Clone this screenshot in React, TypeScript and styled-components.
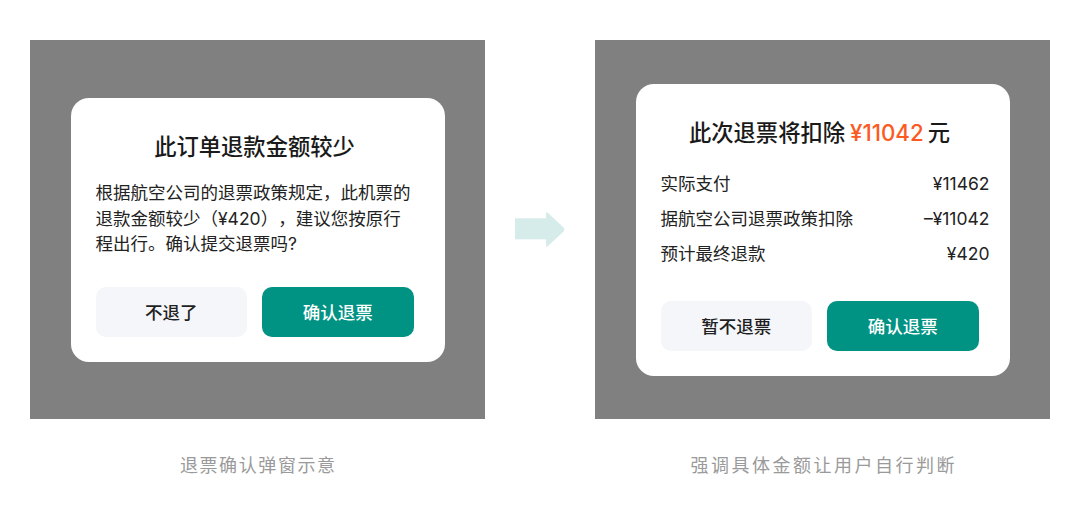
import React from "react";
import styled, { createGlobalStyle } from "styled-components";

const GlobalStyle = createGlobalStyle`
  html, body {
    margin: 0;
    padding: 0;
    background: #ffffff;
  }
  body {
    font-family: "Inter", "Noto Sans CJK SC", sans-serif;
    color: #1f1f1f;
    -webkit-font-smoothing: antialiased;
    text-spacing-trim: space-all;
  }
`;

const Page = styled.div`
  width: 1080px;
  height: 517px;
  box-sizing: border-box;
  padding: 40px 0 0 30px;
  display: flex;
  align-items: flex-start;
`;

const Figure = styled.figure`
  margin: 0;
  width: 455px;
  display: flex;
  flex-direction: column;
  align-items: center;
`;

const Backdrop = styled.div`
  width: 455px;
  height: 379px;
  background: #808080;
  display: flex;
  align-items: center;
  justify-content: center;
`;

const Caption = styled.figcaption<{ $spacing: number }>`
  margin-top: 32px;
  font-family: "Noto Sans CJK SC", sans-serif;
  font-size: 18px;
  line-height: 26px;
  color: #9a9a9a;
  letter-spacing: ${(p) => p.$spacing}px;
  margin-right: -${(p) => p.$spacing}px;
`;

const Gutter = styled.div`
  width: 110px;
  height: 379px;
  display: flex;
  align-items: center;
  justify-content: center;
`;

const Dialog = styled.div`
  width: 374px;
  box-sizing: border-box;
  background: #ffffff;
  border-radius: 18px;
  padding: 32px 20px 25px 25px;
  display: flex;
  flex-direction: column;
`;

const Title = styled.h2`
  margin: 0 0 0 -11px;
  font-family: "Noto Sans CJK SC", sans-serif;
  font-size: 22.3px;
  line-height: 30px;
  font-weight: 500;
  color: #1a1a1a;
  text-align: center;
`;

const Amount = styled.span`
  font-family: "Inter", "Noto Sans CJK SC", sans-serif;
  color: #fc5a22;
  margin: 0 4px 0 5px;
`;

const Message = styled.p`
  margin: 20px 0 31px;
  font-size: 17.5px;
  line-height: 25px;
  color: #222222;
  text-spacing-trim: space-all;
`;

const Paren = styled.span`
  font-family: "Noto Sans CJK SC", sans-serif;
`;

const Breakdown = styled.dl`
  margin: 23px 0 35px;
  display: flex;
  flex-direction: column;
  gap: 10px;
`;

const Line = styled.div`
  display: flex;
  justify-content: space-between;
  align-items: center;
  font-size: 17.5px;
  line-height: 25px;
  color: #222222;
`;

const Label = styled.dt`
  margin: 0;
`;

const Value = styled.dd`
  margin: 0;
`;

const Actions = styled.div`
  display: flex;
  gap: 15px;
`;

const Button = styled.button<{ $primary?: boolean }>`
  width: 151.5px;
  height: 50px;
  border: none;
  border-radius: 10px;
  font-family: "Noto Sans CJK SC", sans-serif;
  font-size: 17.5px;
  font-weight: 500;
  background: ${(p) => (p.$primary ? "#009283" : "#f5f6fa")};
  color: ${(p) => (p.$primary ? "#ffffff" : "#1f1f1f")};
  padding: 0;
  cursor: pointer;
`;

const Arrow = () => (
  <svg width="50" height="37" viewBox="0 0 50 37" aria-hidden="true">
    <rect x="0" y="7.3" width="32" height="21" fill="#d6ecea" />
    <path
      d="M31 3.2 Q31 0 33.3 2.2 L48.6 16.6 Q50 18.5 48.6 20.4 L33.3 34.8 Q31 37 31 33.8 Z"
      fill="#d6ecea"
    />
  </svg>
);

export default function App() {
  return (
    <>
      <GlobalStyle />
      <Page>
        <Figure>
          <Backdrop>
            <Dialog>
              <Title>此订单退款金额较少</Title>
              <Message>
                根据航空公司的退票政策规定，此机票的
                <br />
                退款金额较少<Paren>（</Paren>¥420<Paren>），</Paren>建议您按原行
                <br />
                程出行。确认提交退票吗?
              </Message>
              <Actions>
                <Button>不退了</Button>
                <Button $primary>确认退票</Button>
              </Actions>
            </Dialog>
          </Backdrop>
          <Caption $spacing={1.6}>退票确认弹窗示意</Caption>
        </Figure>

        <Gutter>
          <Arrow />
        </Gutter>

        <Figure>
          <Backdrop>
            <Dialog>
              <Title>
                此次退票将扣除<Amount>¥11042</Amount>元
              </Title>
              <Breakdown>
                <Line>
                  <Label>实际支付</Label>
                  <Value>¥11462</Value>
                </Line>
                <Line>
                  <Label>据航空公司退票政策扣除</Label>
                  <Value>–¥11042</Value>
                </Line>
                <Line>
                  <Label>预计最终退款</Label>
                  <Value>¥420</Value>
                </Line>
              </Breakdown>
              <Actions>
                <Button>暂不退票</Button>
                <Button $primary>确认退票</Button>
              </Actions>
            </Dialog>
          </Backdrop>
          <Caption $spacing={2.5}>强调具体金额让用户自行判断</Caption>
        </Figure>
      </Page>
    </>
  );
}
